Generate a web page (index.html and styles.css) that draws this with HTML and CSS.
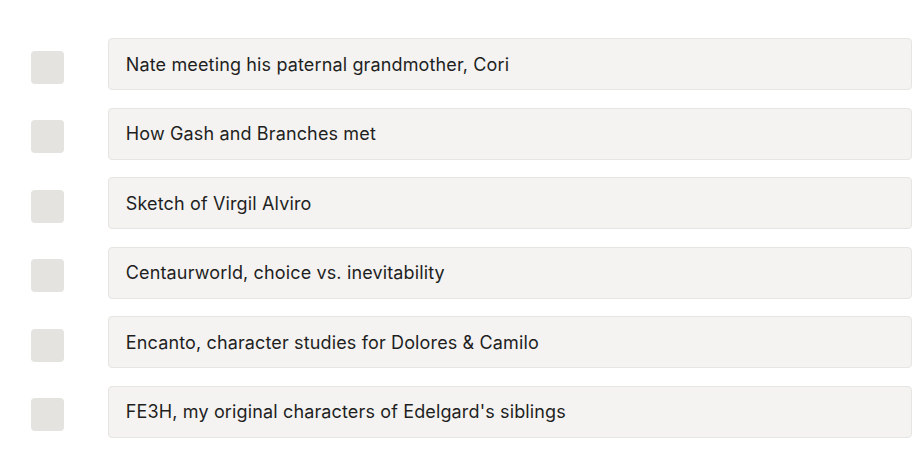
FILE: index.html
```html
<!DOCTYPE html>
<html>
<head>
<meta charset="utf-8">
<link rel="stylesheet" href="styles.css">
</head>
<body>
<ul class="list">
  <li class="row"><span class="check"></span><div class="item">Nate meeting his paternal grandmother, Cori</div></li>
  <li class="row"><span class="check"></span><div class="item">How Gash and Branches met</div></li>
  <li class="row"><span class="check"></span><div class="item">Sketch of Virgil Alviro</div></li>
  <li class="row"><span class="check"></span><div class="item">Centaurworld, choice vs. inevitability</div></li>
  <li class="row"><span class="check"></span><div class="item">Encanto, character studies for Dolores &amp; Camilo</div></li>
  <li class="row"><span class="check"></span><div class="item">FE3H, my original characters of Edelgard's siblings</div></li>
</ul>
</body>
</html>
```
FILE: styles.css
```css
html, body {
  margin: 0;
  padding: 0;
  background: #ffffff;
}
body {
  font-family: Inter, "Noto Sans", sans-serif;
  color: #1f1f1f;
}
.list {
  list-style: none;
  margin: 0;
  padding: 38.3px 7.7px 0 31px;
  display: flex;
  flex-direction: column;
  gap: 17.5px;
}
.row {
  display: flex;
  align-items: flex-start;
  gap: 44.3px;
}
.check {
  flex: none;
  width: 33px;
  height: 33px;
  margin-top: 12.4px;
  border-radius: 4px;
  background: #e4e3df;
}
.item {
  flex: 1;
  box-sizing: border-box;
  height: 52px;
  display: flex;
  align-items: center;
  padding: 0 16.5px;
  background: #f4f3f1;
  border: 1px solid #e6e5e1;
  border-radius: 4px;
  font-size: 18px;
  letter-spacing: 0.14px;
}
```
